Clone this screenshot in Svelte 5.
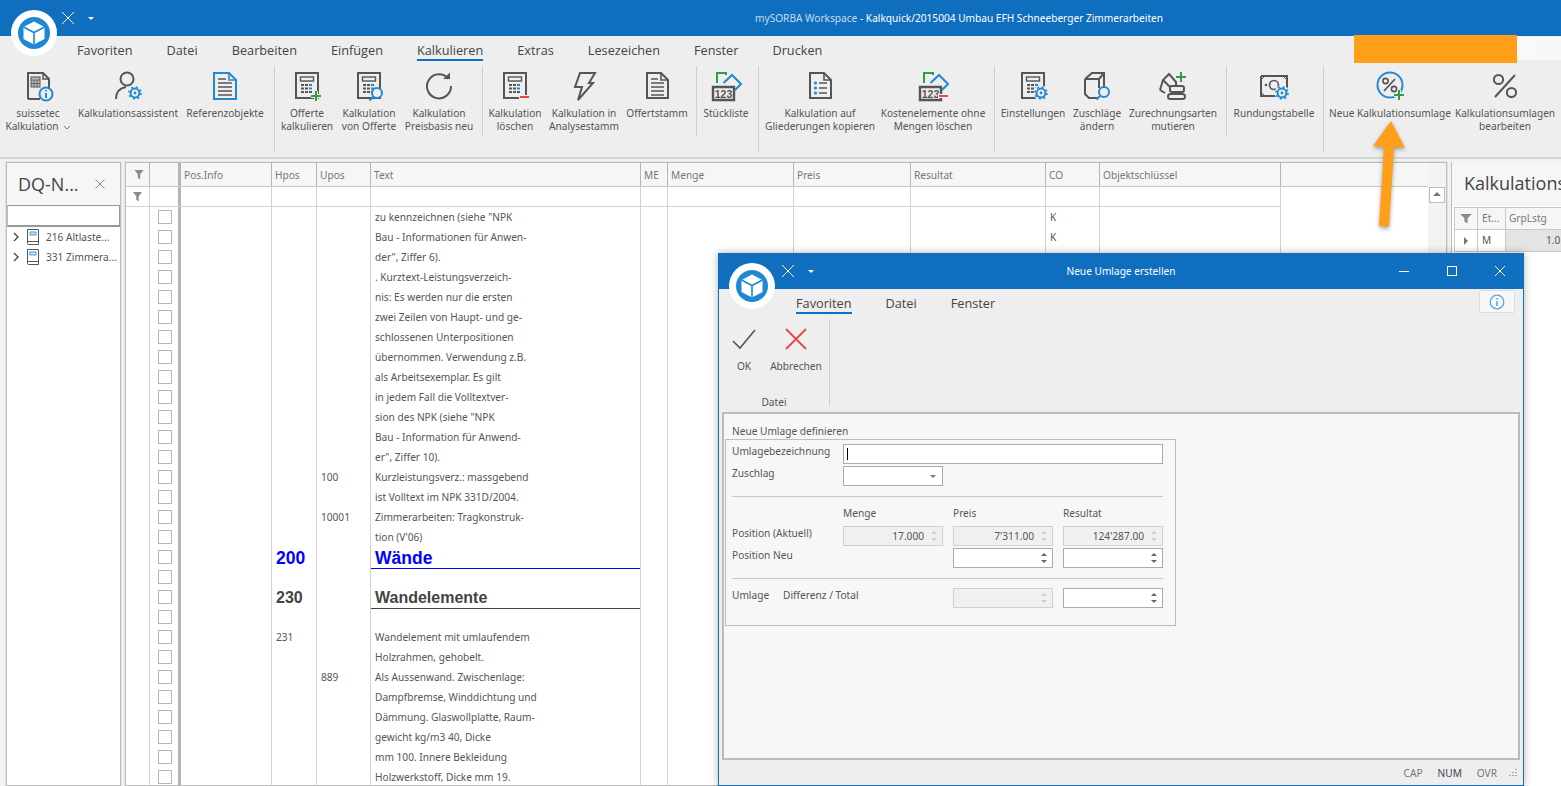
<script lang="ts">
  // Kalkulation window with the "Neue Umlage erstellen" dialog on top.
  const D = "#555";
  const B = "#1f8ad3";
  const G = "#2f9e44";
  const R = "#e8474c";

  const gear = (x: number, y: number) =>
    `<circle cx="${x}" cy="${y}" r="7.5" fill="#eee"/><circle cx="${x}" cy="${y}" r="4.4" fill="none" stroke="${B}" stroke-width="2"/><circle cx="${x}" cy="${y}" r="6" fill="none" stroke="${B}" stroke-width="1.6" stroke-dasharray="2 2.71"/><circle cx="${x}" cy="${y}" r="1.4" fill="${B}"/>`;
  const lens = (x: number, y: number) =>
    `<circle cx="${x}" cy="${y}" r="5" fill="#eee" stroke="${B}" stroke-width="2"/><path d="M${x - 3.5} ${y + 3.5}l-4 4" stroke="${B}" stroke-width="2"/>`;
  const plus = (x: number, y: number) =>
    `<path d="M${x - 5} ${y}h10M${x} ${y - 5}v10" stroke="#eee" stroke-width="4"/><path d="M${x - 5} ${y}h10M${x} ${y - 5}v10" stroke="${G}" stroke-width="2"/>`;
  const minus = (x: number, y: number) =>
    `<path d="M${x - 5} ${y}h10" stroke="#eee" stroke-width="4"/><path d="M${x - 4} ${y}h9" stroke="${R}" stroke-width="2"/>`;

  const keys = () => {
    let out = "";
    for (const y of [14, 17.5, 21]) {
      for (const x of [10, 14, 18]) {
        const color = x === 18 && y < 20 ? B : D;
        out += `<rect x="${x}" y="${y}" width="3" height="2" fill="${color}"/>`;
      }
    }
    return out;
  };
  const calc = `<rect x="5" y="3" width="22" height="25" fill="none" stroke="${D}" stroke-width="2"/><rect x="9.5" y="7" width="13" height="4" fill="none" stroke="${D}" stroke-width="1.4"/>${keys()}`;
  const num = `<path d="M3 17h21v13H3z" fill="none" stroke="${D}" stroke-width="2.4"/><text x="13.500" y="27.500" font-size="10.5" font-weight="bold" font-family="Liberation Sans" text-anchor="middle" fill="${D}">123</text><path d="M7 13V3h9v2" fill="none" stroke="${G}" stroke-width="2"/><path d="M13.500 13l8.500-8 9 9-6 6" fill="none" stroke="${B}" stroke-width="2"/>`;
  const doc = (color: string) =>
    `<path d="M6 3h14l7 7v18H6z" fill="none" stroke="${color}" stroke-width="2"/><path d="M20 3v7h7" fill="none" stroke="${color}" stroke-width="1.6"/>`;
  const docLines = (color: string) =>
    `${doc(color)}<path d="M10 9h7M10 13h13M10 17h13M10 21h13M10 25h13" stroke="${D}" stroke-width="1.6"/>`;

  const ICONS: Record<string, string> = {
    suissetec: `<path d="M6 29V3h15l6 6v9M6 29h12" fill="none" stroke="${D}" stroke-width="2"/><path d="M21 3v6h6" fill="none" stroke="${D}" stroke-width="1.4"/><rect x="9" y="7" width="9" height="10" fill="#bbb" stroke="${D}"/><path d="M9 10h9M9 13.500h9M12 10v7M15 10v7" stroke="${D}" stroke-width=".8"/><circle cx="24" cy="24" r="6.500" fill="#eee" stroke="${B}" stroke-width="2"/><path d="M24 23v5M24 20v1.600" stroke="${B}" stroke-width="2"/>`,
    assistant: `<circle cx="15" cy="9" r="6.500" fill="none" stroke="${D}" stroke-width="2"/><path d="M4 29c0-7 4-11 10-12" fill="none" stroke="${D}" stroke-width="2"/>${gear(23, 23)}`,
    reference: `<path d="M5 3h15l7 7v19H5z" fill="none" stroke="${B}" stroke-width="2"/><path d="M20 3v7h7" fill="none" stroke="${B}" stroke-width="1.6"/><path d="M9 9h8M9 13h14M9 17h14M9 21h14M9 25h14" stroke="${D}" stroke-width="1.6"/>`,
    calcPlus: calc + plus(25, 26),
    calcLens: calc + lens(24, 23),
    refresh: `<path d="M25.500 9A12 12 0 1 0 28 16" fill="none" stroke="${D}" stroke-width="2"/><path d="M20 9h7V2.500z" fill="${D}"/>`,
    calcMinus: calc + minus(25, 27),
    bolt: `<path d="M12 3h15l-6 10h4L10 30l4-13H7z" fill="none" stroke="${D}" stroke-width="2"/>`,
    doc: docLines(D),
    num,
    bullets: `${doc(D)}<circle cx="11.500" cy="13" r="1.600" fill="${B}"/><circle cx="11.500" cy="18" r="1.600" fill="${B}"/><circle cx="11.500" cy="23" r="1.600" fill="${B}"/><path d="M15 13h8M15 18h8M15 23h8" stroke="${D}" stroke-width="1.600"/>`,
    numMinus: num + minus(26, 26),
    calcGear: calc + gear(24, 23),
    cube: `<path d="M4 9l7-6h12v14M4 9v15l4 4h9M4 9h14v9M18 9l5-6" fill="none" stroke="${D}" stroke-width="2"/>${lens(23, 22)}`,
    digger: `<path d="M3 20l3-10 6-6 7 8v5M6 10l8 8M3 20l5 3" fill="none" stroke="${D}" stroke-width="2"/><rect x="13" y="16" width="14" height="6" rx="2" fill="#eee" stroke="${D}" stroke-width="2"/><rect x="11" y="24" width="17" height="5" rx="2.500" fill="#eee" stroke="${D}" stroke-width="2"/><path d="M19 7h10M24 2v10" stroke="${G}" stroke-width="2"/>`,
    note: `<path d="M3 6h26v15M3 6v20h15" fill="none" stroke="${D}" stroke-width="2"/><path d="M3 10l4-4M25 6l4 4M3 22l4 4" stroke="${D}"/><circle cx="16" cy="15" r="4.500" fill="none" stroke="${D}" stroke-width="1.600"/><circle cx="8" cy="15" r="1.300" fill="${D}"/>${gear(24, 23)}`,
    percentNew: `<circle cx="16" cy="15" r="12.500" fill="none" stroke="${B}" stroke-width="2"/><path d="M10 21L21 9" stroke="${D}" stroke-width="1.800"/><circle cx="11.500" cy="11" r="2.600" fill="none" stroke="${D}" stroke-width="1.600"/><circle cx="20" cy="19" r="2.600" fill="none" stroke="${D}" stroke-width="1.600"/>${plus(25, 25)}`,
    percent: `<path d="M6 27L26 5" stroke="${D}" stroke-width="2"/><circle cx="9.500" cy="9.500" r="4.600" fill="none" stroke="${D}" stroke-width="2"/><circle cx="22.500" cy="22.500" r="4.600" fill="none" stroke="${D}" stroke-width="2"/>`,
  };

  const TABS = ["Favoriten", "Datei", "Bearbeiten", "Einfügen", "Kalkulieren", "Extras", "Lesezeichen", "Fenster", "Drucken"];

  type Tool = { label?: string; icon?: string; w?: number; sep?: "tall" | "short"; gap?: number; more?: boolean };
  const TOOLS: Tool[] = [
    { label: "suissetec\nKalkulation", icon: "suissetec", w: 76, more: true },
    { label: "Kalkulationsassistent", icon: "assistant", w: 104 },
    { label: "Referenzobjekte", icon: "reference", w: 90 },
    { sep: "tall", gap: 4 },
    { label: "Offerte\nkalkulieren", icon: "calcPlus", w: 64 },
    { label: "Kalkulation\nvon Offerte", icon: "calcLens", w: 60 },
    { label: "Kalkulation\nPreisbasis neu", icon: "refresh", w: 80 },
    { sep: "short", gap: 3 },
    { label: "Kalkulation\nlöschen", icon: "calcMinus", w: 64 },
    { label: "Kalkulation in\nAnalysestamm", icon: "bolt", w: 74 },
    { label: "Offertstamm", icon: "doc", w: 72 },
    { sep: "short", gap: 3 },
    { label: "Stückliste", icon: "num", w: 58 },
    { sep: "tall", gap: 3 },
    { label: "Kalkulation auf\nGliederungen kopieren", icon: "bullets", w: 122 },
    { label: "Kostenelemente ohne\nMengen löschen", icon: "numMinus", w: 104 },
    { sep: "tall", gap: 9 },
    { label: "Einstellungen", icon: "calcGear", w: 76 },
    { label: "Zuschläge\nändern", icon: "cube", w: 52 },
    { label: "Zurechnungsarten\nmutieren", icon: "digger", w: 100 },
    { sep: "short", gap: 3 },
    { label: "Rundungstabelle", icon: "note", w: 94 },
    { sep: "tall", gap: 2 },
    { label: "Neue Kalkulationsumlage", icon: "percentNew", w: 132 },
    { label: "Kalkulationsumlagen\nbearbeiten", icon: "percent", w: 98 },
  ];

  const COLUMNS = ["Pos.Info", "Hpos", "Upos", "Text", "ME", "Menge", "Preis", "Resultat", "CO", "Objektschlüssel"];

  type Row = { text?: string; hpos?: string; upos?: string; co?: string; kind?: string };
  const ROWS: Row[] = [
    { text: 'zu kennzeichnen (siehe "NPK', co: "K" },
    { text: "Bau - Informationen für Anwen-", co: "K" },
    { text: 'der", Ziffer 6).' },
    { text: ". Kurztext-Leistungsverzeich-" },
    { text: "nis: Es werden nur die ersten" },
    { text: "zwei Zeilen von Haupt- und ge-" },
    { text: "schlossenen Unterpositionen" },
    { text: "übernommen. Verwendung z.B." },
    { text: "als Arbeitsexemplar. Es gilt" },
    { text: "in jedem Fall die Volltextver-" },
    { text: 'sion des NPK (siehe "NPK' },
    { text: "Bau - Information für Anwend-" },
    { text: 'er", Ziffer 10).' },
    { text: "Kurzleistungsverz.: massgebend", upos: "100" },
    { text: "ist Volltext im NPK 331D/2004." },
    { text: "Zimmerarbeiten: Tragkonstruk-", upos: "10001" },
    { text: "tion (V'06)" },
    { text: "Wände", hpos: "200", kind: "blue" },
    { kind: "rule-blue" },
    { text: "Wandelemente", hpos: "230", kind: "dark" },
    { kind: "rule-dark" },
    { text: "Wandelement mit umlaufendem", hpos: "231" },
    { text: "Holzrahmen, gehobelt." },
    { text: "Als Aussenwand. Zwischenlage:", upos: "889" },
    { text: "Dampfbremse, Winddichtung und" },
    { text: "Dämmung. Glaswollplatte, Raum-" },
    { text: "gewicht kg/m3 40, Dicke" },
    { text: "mm 100. Innere Bekleidung" },
    { text: "Holzwerkstoff, Dicke mm 19." },
  ];

  const TREE = ["216 Altlaste...", "331 Zimmera..."];
</script>

{#snippet logo()}
  <svg class="logo" viewBox="0 0 46 46" width="46" height="46">
    <circle cx="23" cy="23" r="23" fill="#fff" />
    <circle cx="23" cy="23" r="16" fill="#1e88d4" />
    <path d="M23 11.500l10.500 5.500v12L23 34.500 12.500 29V17z" fill="#fff" />
    <path d="M12.500 17L23 22.500 33.500 17M23 22.500v12" fill="none" stroke="#1e88d4" stroke-width="1.600" />
  </svg>
{/snippet}

{#snippet quick()}
  <svg class="qa-x" viewBox="0 0 14 14" width="14" height="14"><path d="M1 1l12 12M13 1L1 13" stroke="#fff" fill="none" /></svg>
  <span class="qa-tri"></span>
{/snippet}

<div class="window">
  <header class="titlebar">
    {@render quick()}
    <p class="title"><span>mySORBA Workspace</span> - Kalkquick/2015004 Umbau EFH Schneeberger Zimmerarbeiten</p>
  </header>
  <div class="logo-slot">{@render logo()}</div>

  <nav class="tabs">
    {#each TABS as tab (tab)}
      <span class="tab" class:active={tab === "Kalkulieren"}>{tab}</span>
    {/each}
    <span class="search-box">Aa</span>
  </nav>

  <div class="ribbon">
    {#each TOOLS as tool, i (i)}
      {#if tool.sep}
        <span class="sep {tool.sep}" style="margin-left: {tool.gap}px"></span>
      {:else}
        <div class="tool" style="width: {tool.w}px">
          <svg viewBox="0 0 32 32" width="32" height="32">{@html ICONS[tool.icon ?? "doc"]}</svg>
          <span class="tool-label">{tool.label}{#if tool.more}<svg class="more" viewBox="0 0 8 5" width="8" height="5"><path d="M1 1l3 3 3-3" fill="none" stroke="#777" /></svg>{/if}</span>
        </div>
      {/if}
    {/each}
  </div>

  <main class="main">
    <aside class="side">
      <div class="side-head">
        <span class="side-title">DQ-N...</span>
        <svg viewBox="0 0 10 10" width="10" height="10"><path d="M.5.5l9 9M9.500.5l-9 9" stroke="#888" fill="none" /></svg>
      </div>
      <div class="side-search"></div>
      <ul class="tree">
        {#each TREE as item (item)}
          <li>
            <svg viewBox="0 0 6 10" width="6" height="10"><path d="M1 1l4 4-4 4" fill="none" stroke="#444" stroke-width="1.300" /></svg>
            <svg viewBox="0 0 14 16" width="14" height="16"><path d="M1.500.5h11v15h-10a1 1 0 0 1-1-1z" fill="none" stroke="#555" /><path d="M1.500 12.500h11" stroke="#555" /><rect x="4" y="3" width="6" height="3" fill="#cfe6f7" stroke={B} stroke-width=".8" /></svg>
            <span>{item}</span>
          </li>
        {/each}
      </ul>
    </aside>

    <section class="grid">
      <div class="table">
        <div class="row head">
          <span class="cell ind"><span class="funnel"></span></span>
          <span class="cell chk"></span>
          {#each COLUMNS as col (col)}
            <span class="cell">{col}</span>
          {/each}
        </div>
        <div class="row filter">
          <span class="cell ind"><span class="funnel"></span></span>
          <span class="cell chk"></span>
          {#each COLUMNS as col (col)}
            <span class="cell"></span>
          {/each}
        </div>
        {#each ROWS as row, i (i)}
          <div class="row {row.kind ?? ''}">
            <span class="cell ind"></span>
            <span class="cell chk"><span class="box"></span></span>
            <span class="cell"></span>
            <span class="cell hpos">{row.hpos ?? ""}</span>
            <span class="cell">{row.upos ?? ""}</span>
            <span class="cell text">{row.text ?? ""}</span>
            <span class="cell"></span>
            <span class="cell"></span>
            <span class="cell"></span>
            <span class="cell"></span>
            <span class="cell">{row.co ?? ""}</span>
            <span class="cell"></span>
          </div>
        {/each}
      </div>
      <div class="vscroll"><span class="scroll-up"></span></div>
    </section>

    <aside class="right">
      <div class="right-head">Kalkulations</div>
      <div class="mini">
        <div class="mini-row mini-head">
          <span class="mini-ind"><span class="funnel"></span></span>
          <span class="mini-et">Et...</span>
          <span>GrpLstg</span>
        </div>
        <div class="mini-row">
          <span class="mini-ind"><span class="caret"></span></span>
          <span class="mini-et">M</span>
          <span class="mini-val">1.0</span>
        </div>
      </div>
    </aside>
  </main>

  <!-- annotations painted over the screenshot -->
  <div class="mark"></div>
  <svg class="arrow" viewBox="0 0 40 112" width="40" height="112">
    <path d="M21 1l14 27-11-1-5 80-10-1 5-79-11-1z" fill="#ff9e18" />
  </svg>

  <div class="dialog">
    <header class="dlg-bar">
      <div class="dlg-logo">{@render logo()}</div>
      {@render quick()}
      <p class="dlg-title">Neue Umlage erstellen</p>
      <div class="dlg-controls">
        <svg viewBox="0 0 10 10" width="10" height="10"><path d="M0 5.500h10" stroke="#fff" /></svg>
        <svg viewBox="0 0 10 10" width="10" height="10"><rect x=".5" y=".5" width="9" height="9" fill="none" stroke="#fff" /></svg>
        <svg viewBox="0 0 10 10" width="10" height="10"><path d="M0 0l10 10M10 0L0 10" fill="none" stroke="#fff" /></svg>
      </div>
    </header>
    <nav class="dlg-tabs">
      <span class="tab active">Favoriten</span>
      <span class="tab">Datei</span>
      <span class="tab">Fenster</span>
      <span class="info">
        <svg viewBox="0 0 16 16" width="16" height="16"><circle cx="8" cy="8" r="6.800" fill="none" stroke="#5ba7dc" stroke-width="1.300" /><path d="M8 7v5M8 4v1.600" stroke="#5ba7dc" stroke-width="1.600" /></svg>
      </span>
    </nav>
    <div class="dlg-ribbon">
      <div class="dlg-group">
        <div class="dlg-tools">
          <div class="dlg-tool ok">
            <svg viewBox="0 0 24 24" width="24" height="24"><path d="M1 14l7 7L23 3" fill="none" stroke="#555" stroke-width="1.600" /></svg>
            <span>OK</span>
          </div>
          <div class="dlg-tool cancel">
            <svg viewBox="0 0 24 24" width="24" height="24"><path d="M2 2l20 20M22 2L2 22" fill="none" stroke="#e8474c" stroke-width="1.800" /></svg>
            <span>Abbrechen</span>
          </div>
        </div>
        <span class="dlg-group-name">Datei</span>
      </div>
      <span class="dlg-sep"></span>
    </div>

    <div class="content">
      <p class="legend">Neue Umlage definieren</p>
      <div class="form">
        <label for="umlage">Umlagebezeichnung</label>
        <div class="input wide" id="umlage"><span class="cursor"></span></div>

        <span>Zuschlag</span>
        <div class="input combo"><span class="tri-down"></span></div>
        <span class="fill"></span>

        <hr />

        <span></span>
        <span>Menge</span>
        <span>Preis</span>
        <span>Resultat</span>

        <span>Position (Aktuell)</span>
        <div class="input off">17.000<span class="spin"></span></div>
        <div class="input off">7'311.00<span class="spin"></span></div>
        <div class="input off">124'287.00<span class="spin"></span></div>

        <span>Position Neu</span>
        <span></span>
        <div class="input"><span class="spin"></span></div>
        <div class="input"><span class="spin"></span></div>

        <hr />

        <span class="pair"><span>Umlage</span><span>Differenz / Total</span></span>
        <div class="input off"><span class="spin"></span></div>
        <div class="input"><span class="spin"></span></div>
      </div>
    </div>

    <footer class="status">
      <span>CAP</span>
      <span class="on">NUM</span>
      <span>OVR</span>
      <svg viewBox="0 0 10 10" width="10" height="10"><path d="M8 1v1M5 4v1M8 4v1M2 7v1M5 7v1M8 7v1" stroke="#aaa" stroke-width="2" /></svg>
    </footer>
  </div>
</div>

<style>
  :global(body) {
    margin: 0;
  }

  p {
    margin: 0;
  }

  .window {
    position: relative;
    width: 1561px;
    height: 786px;
    overflow: hidden;
    display: flex;
    flex-direction: column;
    background: #eee;
    font-family: "Noto Sans", "Liberation Sans", sans-serif;
    font-size: 10.15px;
    color: #555;
  }

  .titlebar {
    flex: none;
    height: 36px;
    display: flex;
    align-items: center;
    background: #106ebe;
    color: #fff;
    padding-left: 61px;
  }

  .qa-tri {
    width: 0;
    height: 0;
    margin-left: 13px;
    border: 3px solid transparent;
    border-top: 3px solid #fff;
    border-bottom: 0;
  }

  .title {
    margin-left: 661px;
    white-space: nowrap;
  }

  .title span {
    color: #c6dcef;
  }

  .logo-slot {
    position: absolute;
    left: 11px;
    top: 10px;
  }

  .logo {
    display: block;
  }

  .tabs {
    flex: none;
    position: relative;
    height: 28px;
    display: flex;
    gap: 34px;
    padding-left: 77px;
    box-sizing: border-box;
  }

  .tab {
    height: 25px;
    box-sizing: border-box;
    padding-top: 6px;
    font-family: "Open Sans", sans-serif;
    font-size: 12.72px;
    line-height: 17px;
    color: #444;
  }

  .tab.active {
    border-bottom: 2px solid #106ebe;
  }

  .search-box {
    position: absolute;
    left: 1517px;
    top: 1px;
    width: 44px;
    height: 23px;
    background: #f8f8f8;
    color: #fff;
    padding: 5px 0 0 6px;
    box-sizing: border-box;
  }

  .ribbon {
    flex: none;
    height: 93px;
    display: flex;
    align-items: flex-start;
    border-bottom: 2px solid #d4d4d4;
  }

  .sep {
    flex: none;
    width: 1px;
    margin-top: 2px;
    background: #d0d0d0;
  }

  .sep.tall {
    height: 87px;
  }

  .sep.short {
    height: 70px;
  }

  .tool {
    flex: none;
    display: flex;
    flex-direction: column;
    align-items: center;
    padding-top: 6px;
    gap: 5px;
  }

  .tool-label {
    white-space: pre;
    text-align: center;
    line-height: 13px;
  }

  .more {
    margin-left: 4px;
  }

  .main {
    flex: 1;
    min-height: 0;
    display: flex;
    gap: 4px;
    padding: 3px 0 0 6px;
    background: #f2f2f2;
  }

  .side {
    flex: none;
    width: 115px;
    box-sizing: border-box;
    border: 1px solid #bdbdbd;
    background: #fff;
    outline: 1px solid #e2e2e2;
  }

  .side-head {
    height: 42px;
    display: flex;
    align-items: center;
    justify-content: space-between;
    padding: 0 15px 0 11px;
    background: #f6f6f6;
  }

  .side-title {
    font-family: "Open Sans", sans-serif;
    font-size: 18px;
    color: #444;
  }

  .side-search {
    height: 19px;
    border: 1px solid #999;
    border-bottom-width: 2px;
    border-left-color: #bbb;
    background: #fff;
  }

  .tree {
    margin: 0;
    padding: 0;
    list-style: none;
  }

  .tree li {
    height: 20px;
    display: flex;
    align-items: center;
    gap: 6px;
    padding-left: 6px;
    white-space: nowrap;
    overflow: hidden;
    color: #555;
  }

  .tree li svg:nth-child(2) {
    margin-left: 1px;
  }

  .grid {
    flex: none;
    width: 1322px;
    box-sizing: border-box;
    border: 1px solid #bdbdbd;
    outline: 1px solid #e2e2e2;
    display: flex;
    background: #fff;
  }

  .table {
    flex: 1;
    min-width: 0;
  }

  .row {
    display: grid;
    grid-template-columns: 24px 31px 91px 45px 54px 270px 27px 126px 117px 135px 54px 181px;
    height: 20px;
    width: 1155px;
    line-height: 20px;
    color: #555;
  }

  .cell {
    box-sizing: border-box;
    border-right: 1px solid #d2d2d2;
    padding-left: 4px;
    white-space: nowrap;
    overflow: hidden;
  }

  .cell.ind,
  .cell.chk {
    padding: 0;
    display: flex;
    align-items: center;
    justify-content: center;
  }

  .cell.chk {
    border-right: 3px solid #b4b4b4;
    padding-left: 3px;
    padding-right: 1px;
  }

  .box {
    width: 12px;
    height: 12px;
    border: 1px solid #b5b5b5;
    background: #fff;
  }

  .row.head {
    height: 23px;
    line-height: 24px;
    background: #f6f6f6;
    border-bottom: 1px solid #c8c8c8;
    width: 100%;
    color: #777;
    grid-template-columns: 24px 31px 91px 45px 54px 270px 27px 126px 117px 135px 54px 181px 1fr;
  }

  .row.head .cell {
    border-right-color: #b5b5b5;
    padding-left: 3px;
  }

  .row.filter {
    border-bottom: 1px solid #d2d2d2;
    box-sizing: content-box;
    height: 19px;
  }

  .funnel {
    width: 10px;
    height: 10px;
    background: #8c8c8c;
    clip-path: polygon(0 0, 100% 0, 62% 48%, 62% 100%, 38% 82%, 38% 48%);
  }

  .row.blue .cell,
  .row.dark .cell {
    font-family: "Liberation Sans", sans-serif;
    font-weight: bold;
  }

  .row.blue .hpos,
  .row.blue .text {
    color: #0000ff;
    font-size: 17.500px;
    line-height: 23px;
  }

  .row.dark .hpos,
  .row.dark .text {
    color: #444;
    font-size: 16px;
    line-height: 22px;
  }

  .row.rule-blue .text {
    background: linear-gradient(#0000ff, #0000ff) 0 1px / 100% 1px no-repeat;
  }

  .row.rule-dark .text {
    background: linear-gradient(#444, #444) 0 1px / 100% 1px no-repeat;
  }

  .vscroll {
    flex: none;
    width: 18px;
    box-sizing: border-box;
    padding: 24px 1px 0;
    background: #f3f3f3;
  }

  .scroll-up {
    display: block;
    width: 14px;
    height: 14px;
    border: 1px solid #bdbdbd;
    background: #fff;
    position: relative;
  }

  .scroll-up::after {
    content: "";
    position: absolute;
    left: 3px;
    top: 4px;
    border-left: 4px solid transparent;
    border-right: 4px solid transparent;
    border-bottom: 4px solid #777;
  }

  .right {
    flex: 1;
    min-width: 0;
    border-left: 1px solid #bdbdbd;
    background: #fff;
    overflow: hidden;
  }

  .right-head {
    height: 44px;
    line-height: 42px;
    padding-left: 12px;
    background: #f6f6f6;
    font-family: "Open Sans", sans-serif;
    font-size: 18px;
    color: #444;
    white-space: nowrap;
  }

  .mini {
    margin: 1px 0 0 2px;
    border: 1px solid #c8c8c8;
    border-right: 0;
  }

  .mini-row {
    display: grid;
    grid-template-columns: 23px 28px 1fr;
    height: 21px;
    line-height: 21px;
    color: #555;
    white-space: nowrap;
  }

  .mini-head {
    background: #f6f6f6;
    color: #777;
    border-bottom: 1px solid #c8c8c8;
  }

  .mini-ind {
    display: flex;
    align-items: center;
    justify-content: center;
    border-right: 1px solid #c8c8c8;
  }

  .mini-et {
    padding-left: 4px;
    border-right: 1px solid #c8c8c8;
  }

  .mini-head span:last-child {
    padding-left: 3px;
  }

  .mini-val {
    background: #e4e4e4;
    padding-left: 40px;
  }

  .caret {
    border-top: 4px solid transparent;
    border-bottom: 4px solid transparent;
    border-left: 4px solid #777;
  }

  .mark {
    position: absolute;
    left: 1354px;
    top: 35px;
    width: 163px;
    height: 28px;
    background: #ff9e18;
  }

  .arrow {
    position: absolute;
    left: 1370px;
    top: 120px;
    filter: drop-shadow(0 2px 2px rgba(0, 0, 0, 0.35));
  }

  .dialog {
    position: absolute;
    left: 718px;
    top: 253px;
    width: 806px;
    height: 533px;
    box-sizing: border-box;
    border: 1px solid #106ebe;
    border-top-width: 0;
    background: #eee;
    box-shadow: 0 0 8px rgba(0, 0, 0, 0.3);
    display: flex;
    flex-direction: column;
  }

  .dlg-bar {
    flex: none;
    position: relative;
    height: 36px;
    display: flex;
    align-items: center;
    padding-left: 62px;
    background: #106ebe;
    color: #fff;
  }

  .dlg-logo {
    position: absolute;
    left: 10px;
    top: 10px;
    z-index: 1;
  }

  .dlg-title {
    position: absolute;
    left: 0;
    right: 0;
    text-align: center;
  }

  .dlg-controls {
    position: absolute;
    right: 18px;
    top: 13px;
    display: flex;
    gap: 38px;
  }

  .dlg-tabs {
    flex: none;
    position: relative;
    height: 29px;
    display: flex;
    gap: 34px;
    padding-left: 77px;
    box-sizing: border-box;
  }

  .info {
    position: absolute;
    left: 760px;
    top: 1px;
    width: 36px;
    height: 23px;
    box-sizing: border-box;
    display: flex;
    align-items: center;
    justify-content: center;
    background: #f7f7f7;
    border: 1px solid #dcdcdc;
    border-radius: 2px;
  }

  .dlg-ribbon {
    flex: none;
    height: 94px;
    display: flex;
    align-items: flex-start;
  }

  .dlg-group {
    width: 110px;
    height: 90px;
    margin-top: 1px;
    display: flex;
    flex-direction: column;
    align-items: center;
    justify-content: space-between;
  }

  .dlg-sep {
    width: 1px;
    height: 87px;
    margin-top: 1px;
    background: #d0d0d0;
  }

  .dlg-tools {
    display: flex;
    align-self: flex-start;
    padding-top: 8px;
  }

  .dlg-tool {
    display: flex;
    flex-direction: column;
    align-items: center;
    gap: 8px;
    color: #555;
  }

  .dlg-tool.ok {
    width: 50px;
  }

  .dlg-tool.cancel {
    width: 54px;
  }

  .dlg-group-name {
    line-height: 14px;
  }

  .content {
    flex: none;
    height: 348px;
    box-sizing: border-box;
    margin: 0 3px;
    border: 2px solid #bbb;
    background: #f7f7f7;
    padding-top: 10px;
  }

  .legend {
    padding-left: 8px;
    line-height: 14px;
    margin-bottom: 1px;
    color: #555;
  }

  .form {
    width: 451px;
    height: 187px;
    box-sizing: border-box;
    margin-left: 1px;
    border: 1px solid #bdbdbd;
    padding: 4px 11px 0 6px;
    display: grid;
    grid-template-columns: 101px 100px 100px 100px;
    grid-template-rows: 22px 21px 19px 20px 22px 21px 19px 20px;
    column-gap: 10px;
    line-height: 14px;
    color: #555;
  }

  .form hr {
    grid-column: 1 / -1;
    align-self: center;
    width: 100%;
    margin: 0;
    border: 0;
    border-top: 1px solid #c8c8c8;
  }

  .form .fill {
    grid-column: span 2;
  }

  .pair {
    grid-column: span 2;
    display: flex;
    gap: 14px;
  }

  .input {
    position: relative;
    height: 20px;
    box-sizing: border-box;
    border: 1px solid #ababab;
    background: #fff;
    text-align: right;
    line-height: 19px;
    padding-right: 18px;
  }

  .input.wide {
    grid-column: 2 / -1;
  }

  .input.off {
    border-color: #d0d0d0;
    background: #f0f0f0;
    color: #555;
  }

  .cursor {
    position: absolute;
    left: 3px;
    top: 3px;
    width: 1px;
    height: 12px;
    background: #000;
  }

  .tri-down {
    position: absolute;
    right: 6px;
    top: 8px;
    border-left: 3px solid transparent;
    border-right: 3px solid transparent;
    border-top: 3px solid #777;
  }

  .spin::before,
  .spin::after {
    content: "";
    position: absolute;
    right: 5px;
    border-left: 3px solid transparent;
    border-right: 3px solid transparent;
  }

  .spin::before {
    top: 4px;
    border-bottom: 3px solid #666;
  }

  .spin::after {
    bottom: 4px;
    border-top: 3px solid #666;
  }

  .off .spin::before {
    border-bottom-color: #ccc;
  }

  .off .spin::after {
    border-top-color: #ccc;
  }

  .status {
    flex: 1;
    display: flex;
    align-items: center;
    justify-content: flex-end;
    gap: 15px;
    padding: 0 5px 0 0;
    color: #777;
  }

  .status svg {
    margin-left: -4px;
  }

  .status .on {
    color: #445;
  }
</style>
